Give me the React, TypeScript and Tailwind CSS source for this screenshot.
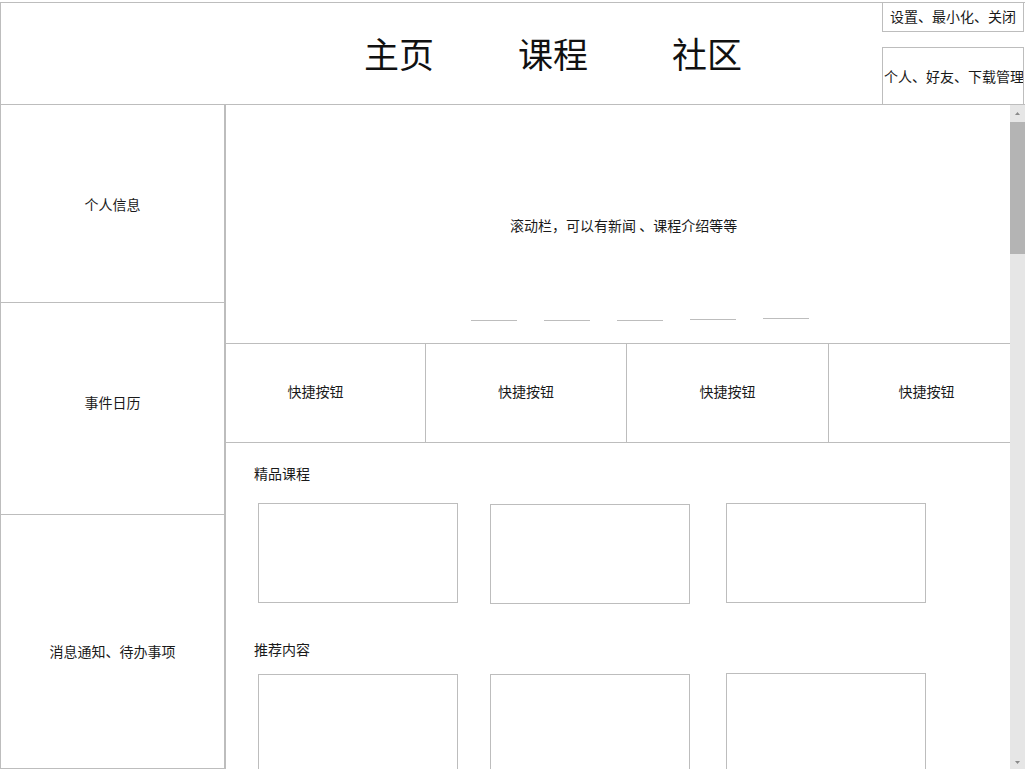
import React from 'react';

// 线框图风格的首页布局
const line = 'border-[#bdbdbd]';

const QuickButton = ({ className }: { className: string }) => (
  <div className={`h-full flex items-center justify-center pb-[3px] ${line} ${className}`}>快捷按钮</div>
);

const Card = ({ className }: { className: string }) => (
  <div className={`w-[200px] h-[100px] border ${line} ${className}`} />
);

export default function App() {
  return (
    <div
      className="w-[1025px] h-[769px] overflow-hidden bg-white text-[#1a1a1a] text-[14px]"
      style={{ fontFamily: '"Noto Sans CJK SC", "Noto Sans", sans-serif' }}
    >
      <div className={`mt-[2px] h-[767px] border-t border-l ${line} flex flex-col`}>
        {/* 顶部导航 */}
        <header className={`h-[102px] shrink-0 flex border-b ${line}`}>
          <nav className="flex-1 flex items-center pl-[363px] gap-[84px] pb-[2px] text-[35px] leading-none text-[#111]">
            <span>主页</span>
            <span>课程</span>
            <span>社区</span>
          </nav>
          <div className="w-[142px] mr-px flex flex-col justify-between">
            <div className={`h-[29px] border-l border-r border-b ${line} flex items-center justify-center pb-[2px]`}>
              设置、最小化、关闭
            </div>
            <div className={`h-[57px] border-l border-t border-r ${line} flex items-center pl-px whitespace-nowrap overflow-hidden`}>
              个人、好友、下载管理
            </div>
          </div>
        </header>

        <div className="flex-1 flex min-h-0">
          {/* 左侧栏 */}
          <aside className={`w-[224px] shrink-0 border-r ${line} flex flex-col`}>
            <div className={`h-[198px] border-b ${line} flex items-center justify-center pt-px`}>个人信息</div>
            <div className={`h-[212px] border-b ${line} flex items-center justify-center pb-[12px]`}>事件日历</div>
            <div className={`flex-1 border-b ${line} flex items-center justify-center pt-[19px]`}>消息通知、待办事项</div>
          </aside>

          {/* 主内容 */}
          <main className={`flex-1 flex border-l ${line} min-w-0`}>
            <div className="flex-1 min-w-0">
              <section className={`h-[239px] border-b ${line} flex flex-col`}>
                <div className="pt-[110px] pl-[284px] leading-[20px] whitespace-nowrap">滚动栏，可以有新闻 、课程介绍等等</div>
                <div className="mt-[85px] pl-[245px] flex gap-[27px]">
                  <span className="w-[46px] h-px bg-[#bdbdbd]" />
                  <span className="w-[46px] h-px bg-[#bdbdbd]" />
                  <span className="w-[46px] h-px bg-[#bdbdbd]" />
                  <span className="w-[46px] h-px bg-[#bdbdbd] -translate-y-px" />
                  <span className="w-[46px] h-px bg-[#bdbdbd] -translate-y-[2px]" />
                </div>
              </section>

              <section className={`h-[99px] border-b ${line} flex`}>
                <QuickButton className="w-[200px] border-r pr-[20px]" />
                <QuickButton className="w-[201px] border-r" />
                <QuickButton className="w-[202px] border-r" />
                <QuickButton className="flex-1 pl-[14px]" />
              </section>

              <section className="pl-[28px]">
                <h2 className="mt-[20px] leading-[20px]">精品课程</h2>
                <div className="mt-[20px] ml-[4px] flex">
                  <Card className="" />
                  <Card className="ml-[32px] mt-px" />
                  <Card className="ml-[36px]" />
                </div>
                <h2 className="mt-[35px] leading-[20px]">推荐内容</h2>
                <div className="mt-[15px] ml-[4px] flex">
                  <Card className="" />
                  <Card className="ml-[32px]" />
                  <Card className="ml-[36px] -mt-px" />
                </div>
              </section>
            </div>

            {/* 滚动条 */}
            <div className="w-[15px] shrink-0 bg-[#e6e6e6] flex flex-col items-center">
              <div className="h-[17px] flex items-center justify-center">
                <svg width="5" height="3" viewBox="0 0 5 3">
                  <path d="M0 3 L2.5 0 L5 3 Z" fill="#8a8a8a" />
                </svg>
              </div>
              <div className="w-full h-[132px] bg-[#b4b4b4]" />
              <div className="flex-1" />
              <div className="h-[8px] flex items-start justify-center">
                <svg width="5" height="3" viewBox="0 0 5 3">
                  <path d="M0 0 L2.5 3 L5 0 Z" fill="#8a8a8a" />
                </svg>
              </div>
            </div>
          </main>
        </div>
      </div>
    </div>
  );
}
